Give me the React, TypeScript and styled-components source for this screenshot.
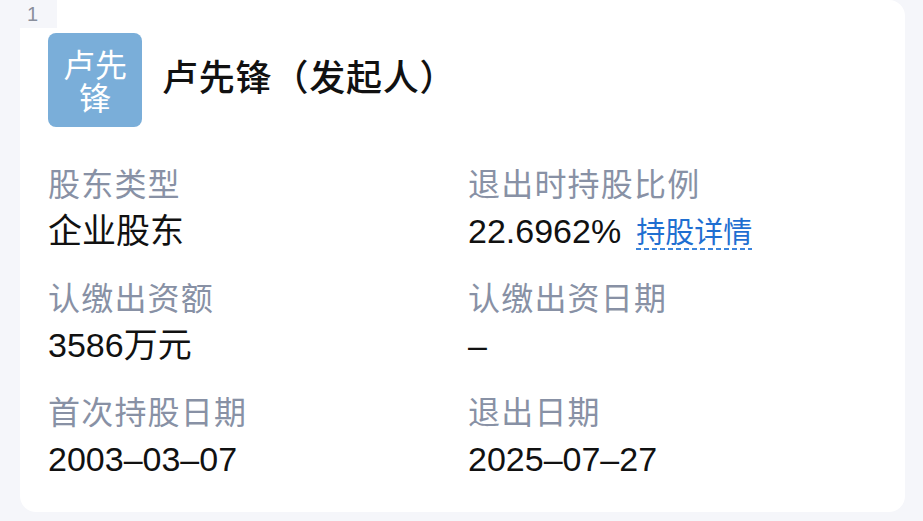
import React from "react";
import styled, { createGlobalStyle } from "styled-components";

const Global = createGlobalStyle`
  html, body { margin: 0; padding: 0; background: #f5f6fa; }
  body { font-family: "Liberation Sans", "Noto Sans CJK SC", sans-serif; }
`;

const Page = styled.div`
  position: relative;
  width: 923px;
  height: 521px;
  padding: 0 18px 9px 20px;
  box-sizing: border-box;
  overflow: hidden;
`;

const IndexBadge = styled.div`
  position: absolute;
  left: 0;
  top: 0;
  width: 57px;
  height: 28px;
  background: #f5f6fa;
  color: #8a8f9c;
  font-size: 20px;
  line-height: 28px;
  padding-left: 27px;
  box-sizing: border-box;
  font-family: "Liberation Sans", sans-serif;
`;

const Card = styled.div`
  background: #ffffff;
  border-radius: 16px;
  height: 512px;
  box-sizing: border-box;
  padding: 33px 28px 0 28px;
`;

const Header = styled.div`
  display: flex;
  align-items: center;
  gap: 20px;
`;

const Avatar = styled.div`
  width: 94px;
  height: 94px;
  border-radius: 8px;
  background: #7aaed9;
  color: #ffffff;
  display: flex;
  align-items: center;
  justify-content: center;
  text-align: center;
  font-size: 32px;
  line-height: 33px;
  font-family: "Noto Sans CJK SC", sans-serif;
  padding: 0 14px;
  box-sizing: border-box;
  word-break: break-all;
`;

const Name = styled.div`
  font-size: 36px;
  font-weight: 500;
  color: #111111;
  font-family: "Noto Sans CJK SC", sans-serif;
  letter-spacing: 0.8px;
  margin-bottom: 10px;
`;

const Grid = styled.div`
  display: grid;
  grid-template-columns: 420px 1fr;
  row-gap: 17px;
  margin-top: 31px;
`;

const Field = styled.div`
  display: flex;
  flex-direction: column;
`;

const Label = styled.div`
  font-size: 32px;
  line-height: 49px;
  color: #8891a5;
  font-family: "Noto Sans CJK SC", sans-serif;
  letter-spacing: 1.2px;
`;

const Value = styled.div`
  font-size: 34px;
  line-height: 48px;
  color: #111111;
  display: flex;
  align-items: baseline;
  gap: 15px;
`;

const Link = styled.span`
  color: #1f6fd1;
  font-family: "Noto Sans CJK SC", sans-serif;
  font-size: 29px;
  line-height: 36px;
  padding-bottom: 2px;
  background-image: linear-gradient(to right, #3a84dc 60%, transparent 60%);
  background-size: 8px 2px;
  background-repeat: repeat-x;
  background-position: left bottom;
`;

const fields: { label: string; value: string; link?: string }[] = [
  { label: "股东类型", value: "企业股东" },
  { label: "退出时持股比例", value: "22.6962%", link: "持股详情" },
  { label: "认缴出资额", value: "3586万元" },
  { label: "认缴出资日期", value: "–" },
  { label: "首次持股日期", value: "2003–03–07" },
  { label: "退出日期", value: "2025–07–27" },
];

export default function App() {
  return (
    <>
      <Global />
      <Page>
        <IndexBadge>1</IndexBadge>
        <Card>
          <Header>
            <Avatar>卢先锋</Avatar>
            <Name>卢先锋（发起人）</Name>
          </Header>
          <Grid>
            {fields.map((f) => (
              <Field key={f.label}>
                <Label>{f.label}</Label>
                <Value>
                  <span>{f.value}</span>
                  {f.link && <Link>{f.link}</Link>}
                </Value>
              </Field>
            ))}
          </Grid>
        </Card>
      </Page>
    </>
  );
}
